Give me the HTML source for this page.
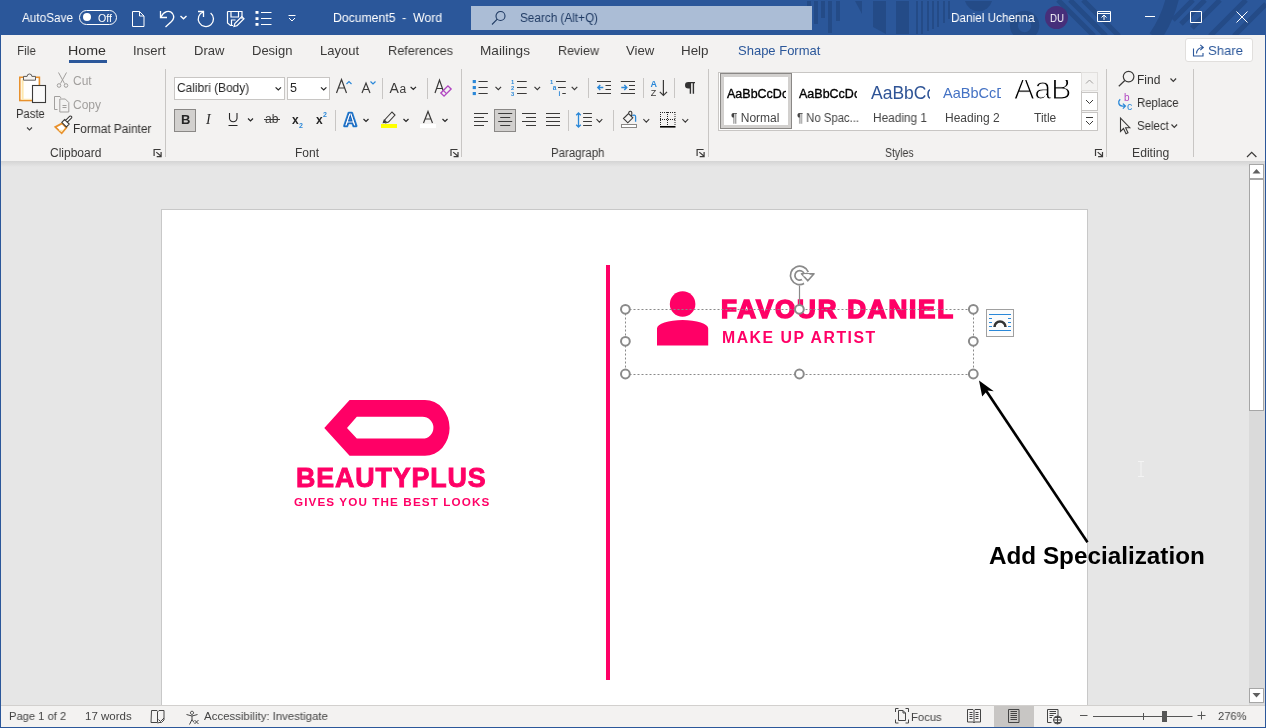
<!DOCTYPE html>
<html><head><meta charset="utf-8">
<style>
*{margin:0;padding:0;box-sizing:border-box}
html,body{width:1266px;height:728px;overflow:hidden;font-family:"Liberation Sans",sans-serif;background:#e6e6e6;position:relative}
.a{position:absolute}
.t{position:absolute;white-space:nowrap;line-height:1;will-change:transform}
#title{left:0;top:0;width:1266px;height:35px;background:#2b579a;overflow:hidden}
#tabs{left:0;top:35px;width:1266px;height:30px;background:#f3f2f1}
#ribbon{left:0;top:65px;width:1266px;height:96px;background:#f3f2f1}
#shadow{left:0;top:161px;width:1266px;height:6px;background:linear-gradient(#d4d4d4,#e6e6e6)}
#status{left:0;top:705px;width:1266px;height:23px;background:#f3f2f1}
.tab{font-size:13px;color:#3b3a39}
.rl{font-size:12px;color:#323130}
.gl{font-size:12px;color:#3b3a39}
.sep{position:absolute;width:1px;background:#c8c6c4}
</style></head><body>
<div id="title" class="a">
<svg class="a" style="left:0;top:0" width="1266" height="35">
<g fill="#244b87">
<rect x="807" y="1" width="4" height="23"/><rect x="814" y="1" width="4" height="23"/><rect x="821" y="1" width="4" height="17"/><rect x="828" y="1" width="4" height="32"/><rect x="836" y="1" width="4" height="20"/>
<path d="M855 1h7v13z"/><path d="M873 1h13v33l-13-7z"/><rect x="896" y="1" width="13" height="33"/>
<rect x="916" y="1" width="2" height="33"/><rect x="921" y="1" width="2" height="33"/><rect x="927" y="1" width="2" height="30"/><rect x="932" y="1" width="2" height="28"/><rect x="937" y="1" width="2" height="26"/><rect x="943" y="1" width="2" height="22"/><rect x="948" y="1" width="2" height="18"/>
<path d="M965 1h27a14 14 0 0 1-27 0z"/>
</g>
<circle cx="1024.6" cy="25.5" r="10.7" fill="none" stroke="#244b87" stroke-width="8"/>
<path d="M1172.5 -2A114.7 114.7 0 0 1 1155 37" fill="none" stroke="#244b87" stroke-width="13"/>
<g stroke="#244b87" stroke-width="5">
<path d="M1058 0l36 36M1070 0l36 36M1083 0l36 36"/>
<path d="M1193 0l-20 20M1205 0l-24 24M1220 0l-28 28M1246 0l-36 36M1266 4l-32 32"/>
</g>
</svg>
<div class="t" style="left:22px;top:12px;font-size:12.5px;color:#fff;transform:scaleX(0.941);transform-origin:0 0">AutoSave</div>
<div class="a" style="left:79px;top:10px;width:38px;height:15px;border:1px solid #fff;border-radius:8px"></div>
<div class="a" style="left:83px;top:13px;width:8px;height:8px;background:#fff;border-radius:50%"></div>
<div class="t" style="left:98px;top:12.5px;font-size:10.6px;color:#fff">Off</div>
<svg class="a" style="left:0;top:0" width="320" height="35" fill="none" stroke="#fff" stroke-width="1">
<path d="M132.5 11.5h7l4.5 4.5v10.5h-11.5z M139.5 11.5v4.5h4.5"/>
<path d="M160.5 11v6.5h6.5" stroke-width="1.3"/>
<path d="M161 17C163.5 11.5 169.5 9.5 172.5 13.5C174.5 16.5 173.5 19.5 171.5 21.5L165.5 27" stroke-width="1.3"/>
<path d="M180.5 16l3 2.8 3-2.8" stroke-width="1.4"/>
<path d="M198 11.5h5.5v5.5" stroke-width="1.3"/>
<path d="M203.3 11.8A7.6 7.6 0 1 0 210.6 13" stroke-width="1.3"/>
<path d="M227.5 11.5h14.5v7.5 M227.5 11.5v11.5l3 2.5h2.5 M231 11.5v5.5h7.5v-5.5 M231.5 25.5v-5.5h4" stroke-width="1.2"/>
<path d="M234 26.5l0.8-3 7-7 2.2 2.2-7 7z" stroke-width="1.2"/>
<path d="M261 12.5h10.5 M261 18.5h10.5 M261 24.5h10.5" stroke-width="1.2"/>
<path d="M288.5 15.5h7 M289 18l3 3 3-3"/>
</svg>
<g></g>
<svg class="a" style="left:0;top:0" width="320" height="35" fill="#fff">
<rect x="255.5" y="11" width="3" height="2.8"/><rect x="255.5" y="17.2" width="3" height="2.8"/><rect x="255.5" y="23" width="3" height="2.8"/>
</svg>
<div class="t" style="left:333px;top:12px;font-size:12.5px;color:#fff;transform:scaleX(0.977);transform-origin:0 0">Document5&nbsp; -&nbsp; Word</div>
<div class="a" style="left:471px;top:6px;width:341px;height:24px;background:#abbdd6"></div>
<svg class="a" style="left:490px;top:10px" width="18" height="16" fill="none" stroke="#1f3a63" stroke-width="1.1"><circle cx="10.5" cy="6" r="4.5"/><path d="M7.3 9.2L2 14.5"/></svg>
<div class="t" style="left:520px;top:11.5px;font-size:12.5px;color:#1f3a63;transform:scaleX(0.940);transform-origin:0 0">Search (Alt+Q)</div>
<div class="t" style="left:951px;top:12px;font-size:12.5px;color:#fff;transform:scaleX(0.939);transform-origin:0 0">Daniel Uchenna</div>
<div class="a" style="left:1045px;top:6px;width:23px;height:23px;border-radius:50%;background:#462f7a"></div>
<div class="t" style="left:1050px;top:12.5px;font-size:11px;color:#fff;transform:scaleX(0.881);transform-origin:0 0">DU</div>
<svg class="a" style="left:1090px;top:0" width="176" height="35" fill="none" stroke="#fff" stroke-width="1">
<path d="M7.5 11.5h13v10h-13z M7.5 13.5h13 M14 20v-5 M11.5 17.5l2.5-2.5 2.5 2.5"/>
<path d="M55 16.5h10"/>
<path d="M100.5 11.5h11v11h-11z"/>
<path d="M146.5 11.5l11 11 M157.5 11.5l-11 11"/>
</svg>
</div>
<div id="tabs" class="a">
<div class="t tab" style="left:17.2px;top:9px;transform:scaleX(0.905);transform-origin:0 0">File</div>
<div class="t tab" style="left:68.2px;top:9px;color:#323130;transform:scaleX(1.095);transform-origin:0 0">Home</div>
<div class="a" style="left:69px;top:25px;width:38px;height:3px;background:#2b579a"></div>
<div class="t tab" style="left:133.2px;top:9px">Insert</div>
<div class="t tab" style="left:194.2px;top:9px">Draw</div>
<div class="t tab" style="left:252.2px;top:9px">Design</div>
<div class="t tab" style="left:320.2px;top:9px">Layout</div>
<div class="t tab" style="left:388.2px;top:9px;transform:scaleX(0.977);transform-origin:0 0">References</div>
<div class="t tab" style="left:480.2px;top:9px;transform:scaleX(1.048);transform-origin:0 0">Mailings</div>
<div class="t tab" style="left:558.2px;top:9px;transform:scaleX(0.962);transform-origin:0 0">Review</div>
<div class="t tab" style="left:626.2px;top:9px;transform:scaleX(1.014);transform-origin:0 0">View</div>
<div class="t tab" style="left:681.2px;top:9px;transform:scaleX(1.030);transform-origin:0 0">Help</div>
<div class="t tab" style="left:738.2px;top:9px;color:#2b579a;transform:scaleX(1.000);transform-origin:0 0">Shape Format</div>
<div class="a" style="left:1185px;top:3px;width:68px;height:24px;background:#fff;border:1px solid #e1dfdd;border-radius:3px"></div>
<svg class="a" style="left:1191px;top:7px" width="18" height="16" fill="none" stroke="#2b579a" stroke-width="1"><path d="M2.5 6.5v7.5h9.5v-3 M5.5 11.5c0.3-3.5 2.5-6 6.5-6 M9.3 2.8l3 2.7-3 2.7" stroke-width="1.1"/></svg>
<div class="t tab" style="left:1208.2px;top:9px;color:#2b579a;font-size:13.5px;transform:scaleX(0.972);transform-origin:0 0">Share</div>
</div>
<div id="ribbon" class="a">
<!-- Clipboard -->
<svg class="a" style="left:0;top:0" width="170" height="97">
<rect x="19.8" y="12.3" width="19.6" height="23.2" fill="#fff" stroke="#e8912d" stroke-width="1.6"/>
<path d="M21.6 14.2h2v19.5h8v1h-10z" fill="#fde8b0"/>
<path d="M23.5 15.2v-3.8h3.6a2.4 2.4 0 0 1 4.8 0h3.6v3.8z" fill="#f3f2f1" stroke="#605e5c" stroke-width="1"/>
<rect x="32.5" y="20.5" width="13" height="17" fill="#fafafa" stroke="#3b3a39" stroke-width="1.1"/>
<path d="M27 62.5l2.5 2.5 2.5-2.5" fill="none" stroke="#444" stroke-width="1.1"/>
<g fill="none" stroke="#a19f9d" stroke-width="1">
<path d="M58.5 7.5l6 11 M66.5 7.5l-6 11"/><circle cx="59" cy="20.5" r="1.8"/><circle cx="66" cy="20.5" r="1.8"/>
<path d="M57.5 44.5h-3v-13h5.5l1 1.5 M59.8 34h5.5l3.5 3.5v9.5h-9z M62.5 40.5h4 M62.5 42.5h4"/>
</g>
<path d="M53.8 61.8L62.2 57.2L67.6 62.6L61.8 69.6Z" fill="#e8912d"/>
<path d="M56.8 62.2L62 59.5L65.2 62.8L61.6 67Z" fill="#fff"/>
<path d="M58.5 65L61.6 67L63.5 64.8Z" fill="#fde8b0"/>
<path d="M61.8 57.3l2.8-2.8 4.6 4.6-2.8 2.8z M65.6 55.4l4.2-4.2a1.3 1.3 0 0 1 1.8 1.8l-4.2 4.2" fill="#fff" stroke="#3b3a39" stroke-width="1.1"/>
<path d="M154.1 91V84.5H160.6 M156.3 87.1L161.1 91.3 M161.1 87.1V91.6H156.7" stroke-width="1.2" fill="none" stroke="#3b3a39"/>
</svg>
<div class="t rl" style="left:16px;top:43px;transform:scaleX(0.935);transform-origin:0 0">Paste</div>
<div class="t rl" style="left:73px;top:10px;color:#a19f9d">Cut</div>
<div class="t rl" style="left:73px;top:34px;color:#a19f9d">Copy</div>
<div class="t rl" style="left:73px;top:58px;transform:scaleX(0.989);transform-origin:0 0">Format Painter</div>
<div class="t gl" style="left:50px;top:82px;transform:scaleX(0.992);transform-origin:0 0">Clipboard</div>
<div class="sep" style="left:165px;top:4px;height:88px"></div>
<!-- Font -->
<div class="a" style="left:174px;top:12px;width:111px;height:23px;background:#fff;border:1px solid #c8c6c4"></div>
<div class="t rl" style="left:177px;top:17px;font-size:12.5px;color:#262626;transform:scaleX(0.954);transform-origin:0 0">Calibri (Body)</div>
<div class="a" style="left:287px;top:12px;width:43px;height:23px;background:#fff;border:1px solid #c8c6c4"></div>
<div class="t rl" style="left:290px;top:17px;font-size:12.5px;color:#262626">5</div>
<div class="a" style="left:174px;top:44px;width:22px;height:23px;background:#d2d0ce;border:1px solid #8a8886"></div>
<svg class="a" style="left:0;top:0" width="470" height="97">
<g fill="none" stroke="#262626" stroke-width="1.2">
<path d="M275.6 22.3l2.7 2.7 2.7-2.7 M321 22.3l2.7 2.7 2.7-2.7 M410.6 21.8l2.7 2.7 2.7-2.7"/>
<path d="M248 53.5l2.5 2.5 2.5-2.5 M363.5 54l2.5 2.5 2.5-2.5 M403.5 54l2.5 2.5 2.5-2.5 M442.5 54l2.5 2.5 2.5-2.5"/>
</g>
<g fill="none" stroke="#3b3a39" stroke-width="1.2">
<path d="M336.5 28l5-13.5 5 13.5 M338.3 23h6.4"/>
<path d="M362 28l4-10 4 10 M363.5 24.5h5"/>

<path d="M435 28l4.5-13 4.5 13 M436.7 23.5h5.6"/>
</g>
<text x="389.5" y="28" font-family="Liberation Sans" font-size="14" fill="#3b3a39">A</text><text x="399.5" y="28" font-family="Liberation Sans" font-size="12" fill="#3b3a39">a</text>
<path d="M346.5 19l2.5-2.5 2.5 2.5 M370.5 16.5l2.5 2.5 2.5-2.5" fill="none" stroke="#2b88d8" stroke-width="1.2"/>
<path d="M451.1 24.05L447.95 20.87L440.87 27.95L444.05 31.13Z" fill="#f3f2f1" stroke="#b146c2" stroke-width="1.4"/><path d="M446.5 28.6L443.4 25.5" stroke="#b146c2" stroke-width="1.2"/>
<text x="181" y="58.5" font-family="Liberation Sans" font-weight="bold" font-size="13" fill="#262626">B</text>
<text x="206" y="58.5" font-family="Liberation Serif" font-style="italic" font-size="14" fill="#262626">I</text>
<path d="M229.5 48v5.5a3.8 3.8 0 0 0 7.5 0v-5.5 M228.5 60.5h9" fill="none" stroke="#262626" stroke-width="1.1"/>
<text x="265" y="58" font-family="Liberation Sans" font-size="12" fill="#3b3a39">ab</text>
<path d="M264 54.5h16" stroke="#3b3a39" stroke-width="1"/>
<text x="292" y="59" font-family="Liberation Sans" font-weight="bold" font-size="12" fill="#262626">x</text>
<text x="299" y="63" font-family="Liberation Sans" font-weight="bold" font-size="7" fill="#2b88d8">2</text>
<text x="316" y="59" font-family="Liberation Sans" font-weight="bold" font-size="12" fill="#262626">x</text>
<text x="323" y="52" font-family="Liberation Sans" font-weight="bold" font-size="7" fill="#2b88d8">2</text>
<text x="344" y="60.5" font-family="Liberation Sans" font-weight="bold" font-size="17.5" fill="#fff" stroke="#2b88d8" stroke-width="2.6" stroke-linejoin="round">A</text>
<text x="344" y="60.5" font-family="Liberation Sans" font-weight="bold" font-size="17.5" fill="#fff" stroke="#0f5ab4" stroke-width="0.9">A</text>
<path d="M383.5 57l2-3 6.5-7 3 3-6.5 7-3 1z" fill="none" stroke="#3b3a39" stroke-width="1.1"/>
<path d="M382.5 58.5l1.5-4.5 3 3z" fill="#3b3a39"/>
<rect x="381" y="59" width="16" height="4" fill="#ffff00"/>
<path d="M423.5 58l4.5-11.5 4.5 11.5 M425.3 54h5.4" fill="none" stroke="#3b3a39" stroke-width="1.2"/>
<rect x="420" y="59" width="16" height="4" fill="#fff"/>
<path d="M451.0 91V84.5H457.5 M453.2 87.1L458.0 91.3 M458.0 87.1V91.6H453.6" stroke-width="1.2" fill="none" stroke="#3b3a39"/>
</svg>
<div class="sep" style="left:382px;top:13px;height:21px"></div>
<div class="sep" style="left:427px;top:13px;height:21px"></div>
<div class="sep" style="left:335px;top:45px;height:21px"></div>
<div class="t gl" style="left:295px;top:82px;transform:scaleX(1.000);transform-origin:0 0">Font</div>
<div class="sep" style="left:461px;top:4px;height:88px"></div>
<!-- Paragraph -->
<svg class="a" style="left:460px;top:0" width="260" height="97">
<g fill="#2b88d8">
<rect x="12.7" y="15" width="3.2" height="3.1"/><rect x="12.7" y="21" width="3.2" height="3.1"/><rect x="12.7" y="27" width="3.2" height="3.1"/>
</g>
<g fill="none" stroke="#3b3a39" stroke-width="1">
<path d="M18.5 16.5h9.2 M18.5 22.5h9.2 M18.5 28.5h9.2" stroke-width="1.2"/>
<path d="M57 16.5h9.7 M57 22.5h9.7 M57 28.5h9.7" stroke-width="1.2"/>
<path d="M96 16.5h9.8 M98 22.5h7.8 M102.3 28.5h3.5" stroke-width="1.2"/>
<path d="M35.5 21.8l2.8 2.8 2.8-2.8 M74.5 21.8l2.8 2.8 2.8-2.8 M111.7 21.8l2.8 2.8 2.8-2.8" stroke-width="1.2"/>
<path d="M137 16.5h14 M145.5 20.5h5.5 M145.5 24.5h5.5 M137 28.5h14" stroke-width="1.2"/>
<path d="M160.8 16.5h14.2 M169 20.5h6 M169 24.5h6 M160.8 28.5h14.2" stroke-width="1.2"/>

</g>
<path d="M137.8 22.5h5.5 M140.3 20l-2.5 2.5 2.5 2.5 M161.3 22.5h5.5 M164.3 20l2.5 2.5-2.5 2.5" fill="none" stroke="#2b88d8" stroke-width="1.4"/>
<text x="51" y="19" font-family="Liberation Sans" font-weight="bold" font-size="5.8" fill="#2b88d8">1</text>
<text x="51" y="25" font-family="Liberation Sans" font-weight="bold" font-size="5.8" fill="#2b88d8">2</text>
<text x="51" y="31" font-family="Liberation Sans" font-weight="bold" font-size="5.8" fill="#2b88d8">3</text>
<text x="90" y="19" font-family="Liberation Sans" font-weight="bold" font-size="5.8" fill="#2b88d8">1</text>
<text x="92.8" y="25" font-family="Liberation Sans" font-weight="bold" font-size="6.5" fill="#2b88d8">a</text>
<text x="98.5" y="31" font-family="Liberation Sans" font-weight="bold" font-size="6.5" fill="#2b88d8">i</text>
<text x="190.5" y="21.8" font-family="Liberation Sans" font-weight="bold" font-size="9" fill="#2b88d8">A</text>
<text x="190.8" y="30.6" font-family="Liberation Sans" font-size="9" fill="#3b3a39">Z</text>
<path d="M203.4 15v15.3 M199.8 26.8l3.6 3.6 3.6-3.6" fill="none" stroke="#3b3a39" stroke-width="1.2"/>
<path d="M228 17.6h7 M230.4 17.5v11.2 M233.4 17.5v11.2" fill="none" stroke="#333" stroke-width="1.4"/><path d="M230.4 16.9H228.3A3.3 3.25 0 0 0 228.3 23.4H230.4Z" fill="#333"/>

</svg>
<div class="a" style="left:494px;top:44px;width:22px;height:23px;background:#d2d0ce;border:1px solid #8a8886"></div>
<svg class="a" style="left:460px;top:0" width="260" height="97">
<g fill="none" stroke="#3b3a39" stroke-width="1">
<path d="M14 48.5h14 M14 52.5h10 M14 56.5h14 M14 60.5h10" stroke-width="1.2"/>
<path d="M38.2 48.5h14 M40.2 52.5h10 M38.2 56.5h14 M40.2 60.5h10" stroke-width="1.2"/>
<path d="M62 48.5h14 M66 52.5h10 M62 56.5h14 M66 60.5h10" stroke-width="1.2"/>
<path d="M86 48.5h14 M86 52.5h14 M86 56.5h14 M86 60.5h14" stroke-width="1.2"/>
<path d="M123.1 48.5h8.8 M123.1 52.5h8.8 M123.1 56.5h8.8 M123.1 60.5h8.8" stroke-width="1.2"/>
<path d="M136.5 54.2l2.9 2.9 2.9-2.9 M183.4 54.2l2.9 2.9 2.9-2.9 M222.4 54.2l2.9 2.9 2.9-2.9" stroke-width="1.1"/>
<rect x="161.5" y="59.5" width="15" height="3" fill="#fff" stroke="#8a8886"/>
<path d="M163.5 53.5L168.5 48.5L172.8 52.8L167.8 57.8Z M168.5 48.5l0.5-1.5a1.5 1.5 0 0 1 2.8 0.5v3.5" stroke-width="1.1"/>
<path d="M200 61.8h15.5" stroke="#000" stroke-width="1.6"/>
</g>
<path d="M118.5 48v14 M116.2 50.3l2.3-2.3 2.3 2.3 M116.2 59.7l2.3 2.3 2.3-2.3" fill="none" stroke="#2b88d8" stroke-width="1.3"/>
<path d="M172.6 51a1.6 1.6 0 0 1 3 0.8v5" fill="none" stroke="#2b88d8" stroke-width="1.3"/>
<path d="M200.5 47v14 M215 47v14 M200 47.5h15.5 M207.5 47v14 M200 54.5h15.5" fill="none" stroke="#262626" stroke-width="1" stroke-dasharray="1 1"/>
<path d="M237.1 91V84.5H243.6 M239.3 87.1L244.1 91.3 M244.1 87.1V91.6H239.7" stroke-width="1.2" fill="none" stroke="#3b3a39"/>
</svg>
<div class="sep" style="left:588px;top:13px;height:20px"></div>
<div class="sep" style="left:643px;top:13px;height:20px"></div>
<div class="sep" style="left:674px;top:13px;height:20px"></div>
<div class="sep" style="left:568px;top:45px;height:21px"></div>
<div class="sep" style="left:613px;top:45px;height:21px"></div>
<div class="t gl" style="left:551px;top:82px;transform:scaleX(0.954);transform-origin:0 0">Paragraph</div>
<div class="sep" style="left:708px;top:4px;height:88px"></div>
<!-- Styles -->
<div class="a" style="left:718px;top:7px;width:380px;height:59px;background:#fff;border:1px solid #c8c6c4"></div>
<div class="a" style="left:720px;top:8px;width:72px;height:56px;border:1px solid #8a8886;box-shadow:inset 0 0 0 3px #d2d0ce"></div>
<div class="a" style="left:723px;top:15px;width:63px;height:30px;overflow:hidden"><div class="t" style="left:3.5px;top:7.5px;font-size:12.5px;color:#000;-webkit-text-stroke:0.35px #000">AaBbCcDc</div></div>
<div class="t" style="left:731px;top:47px;font-size:12px;color:#444">&para; Normal</div>
<div class="a" style="left:795px;top:15px;width:62px;height:30px;overflow:hidden"><div class="t" style="left:4px;top:7.5px;font-size:12.5px;color:#000;-webkit-text-stroke:0.35px #000">AaBbCcDc</div></div>
<div class="t" style="left:797px;top:47px;font-size:12px;color:#444;transform:scaleX(0.942);transform-origin:0 0">&para; No Spac...</div>
<div class="a" style="left:870px;top:14px;width:60px;height:30px;overflow:hidden"><div class="t" style="left:1px;top:6px;font-size:17.5px;color:#2f5496">AaBbCc</div></div>
<div class="t" style="left:873px;top:47px;font-size:12px;color:#444;transform:scaleX(0.987);transform-origin:0 0">Heading 1</div>
<div class="a" style="left:942px;top:14px;width:59px;height:30px;overflow:hidden"><div class="t" style="left:0.5px;top:6.5px;font-size:14.5px;color:#4472c4">AaBbCcD</div></div>
<div class="t" style="left:945px;top:47px;font-size:12px;color:#444;transform:scaleX(0.998);transform-origin:0 0">Heading 2</div>
<div class="a" style="left:1010px;top:14.8px;width:66px;height:22px;overflow:hidden"><div class="t" style="left:3.5px;top:-5.6px;font-size:30.8px;color:#000;-webkit-text-stroke:1.1px #fff;letter-spacing:-0.3px">AaB</div></div>
<div class="t" style="left:1034px;top:47px;font-size:12px;color:#444;transform:scaleX(0.991);transform-origin:0 0">Title</div>
<div class="a" style="left:1081px;top:7px;width:17px;height:59px;background:#f3f2f1;border-left:1px solid #c8c6c4"></div>
<div class="a" style="left:1081px;top:7px;width:17px;height:19px;border:1px solid #e1dfdd;background:#f3f2f1"></div>
<div class="a" style="left:1081px;top:27px;width:17px;height:19px;border:1px solid #c8c6c4;background:#fff"></div>
<div class="a" style="left:1081px;top:47px;width:17px;height:19px;border:1px solid #c8c6c4;background:#fff"></div>
<svg class="a" style="left:1080px;top:0" width="30" height="97" fill="none" stroke="#3b3a39" stroke-width="1">
<path d="M6 18.5l3.5-3.5 3.5 3.5" stroke="#a19f9d"/>
<path d="M6 35l3.5 3.5 3.5-3.5"/>
<path d="M6 52.5h7 M6 56l3.5 3.5 3.5-3.5"/>
<path d="M15.5 91V84.5H22.0 M17.7 87.1L22.5 91.3 M22.5 87.1V91.6H18.1" stroke-width="1.2" stroke="#3b3a39"/>
</svg>
<div class="t gl" style="left:885px;top:82px;transform:scaleX(0.875);transform-origin:0 0">Styles</div>
<div class="sep" style="left:1106px;top:4px;height:88px"></div>
<!-- Editing -->
<svg class="a" style="left:1110px;top:0" width="156" height="97" fill="none" stroke-width="1.1">
<circle cx="18.6" cy="11.6" r="5.3" stroke="#3b3a39" stroke-width="1.2"/><path d="M14.8 15.5l-6 5.8" stroke="#3b3a39" stroke-width="1.2"/>
<path d="M60.5 13.5l2.8 2.8 2.8-2.8 M61.5 59.5l2.8 2.8 2.8-2.8" stroke="#3b3a39" stroke-width="1.2"/>
<path d="M10.2 34.2C7.5 36.5 8.5 41 12.5 41.1H15.2 M12.9 38.6l2.5 2.5-2.5 2.5" stroke="#2b88d8" stroke-width="1.3"/>
<path d="M10.5 53v13.5l3-3 2.5 5.2 2-1-2.4-5h4.2z" stroke="#3b3a39" stroke-width="1.1"/>
<path d="M137 92l4.7-4.7 4.7 4.7" stroke="#3b3a39" stroke-width="1.2"/>
</svg>
<div class="t" style="left:1123.5px;top:27.5px;font-size:10px;color:#b146c2">b</div>
<div class="t" style="left:1127.2px;top:36px;font-size:10.5px;color:#2b88d8">c</div>
<div class="t rl" style="left:1137px;top:9px;transform:scaleX(0.987);transform-origin:0 0">Find</div>
<div class="t rl" style="left:1137px;top:32px;transform:scaleX(0.945);transform-origin:0 0">Replace</div>
<div class="t rl" style="left:1137px;top:55px;transform:scaleX(0.952);transform-origin:0 0">Select</div>
<div class="t gl" style="left:1132px;top:82px;transform:scaleX(1.016);transform-origin:0 0">Editing</div>
<div class="sep" style="left:1193px;top:4px;height:88px"></div>
</div>
<div id="shadow" class="a"></div>
<!-- page -->
<div class="a" style="left:161px;top:209px;width:927px;height:520px;background:#fff;border:1px solid #c8c8c8"></div>
<!-- scrollbar -->
<div class="a" style="left:1249px;top:163px;width:16px;height:542px;background:#dadada"></div>
<div class="a" style="left:1249px;top:164px;width:15px;height:15px;background:#fff;border:1px solid #a6a6a6"></div>
<div class="a" style="left:1249px;top:179px;width:15px;height:232px;background:#fff;border:1px solid #a6a6a6"></div>
<div class="a" style="left:1249px;top:688px;width:15px;height:15px;background:#fff;border:1px solid #a6a6a6"></div>
<svg class="a" style="left:1249px;top:164px" width="16" height="540"><path d="M3.5 9.5h8l-4-4.5z M3.5 529h8l-4 4.5z" fill="#606060"/></svg>
<!-- document content -->
<svg class="a" style="left:0;top:0" width="1266" height="728">
<rect x="606" y="265" width="4" height="415" fill="#ff0066"/>
<path fill="#ff0066" fill-rule="evenodd" d="M324.3 428L349.6 400H425A24.6 27.9 0 0 1 425 455.8H349.6Z M347 428L356.8 416.8H422.5A10.9 10.9 0 0 1 422.5 438.6H356.8Z"/>
<circle cx="682.6" cy="304" r="12.8" fill="#ff0066"/>
<path fill="#ff0066" d="M657 345.5V328.6A25.6 8.6 0 0 1 708.2 328.6V345.5Z"/>
<rect x="986.5" y="309.5" width="27" height="27" fill="#fcfcfc" stroke="#a0a0a0" stroke-width="1"/>
<path d="M989 314.5h22 M989 330.5h22 M989 318.5h3 M989 322.5h3 M989 326.5h3 M1008 318.5h3 M1008 322.5h3 M1008 326.5h3" stroke="#2b88d8" stroke-width="1"/>
<path d="M994.5 327A5.5 5.5 0 0 1 1005.5 327" fill="none" stroke="#333" stroke-width="2.6"/>
<path d="M1087.5 542.3L985 389" stroke="#000" stroke-width="2.6"/>
<path d="M979 380.4L982.2 396.5L987.5 390.5L993.8 391.2Z" fill="#000"/>
</svg>
<div class="t" style="left:720.5px;top:296px;font-size:26px;font-weight:bold;color:#ff0066;letter-spacing:1.8px;-webkit-text-stroke:1.6px #ff0066">FAVOUR DANIEL</div>
<div class="t" style="left:721.5px;top:329.5px;font-size:15.8px;font-weight:bold;color:#ff0066;letter-spacing:1.52px">MAKE UP ARTIST</div>
<div class="t" style="left:296px;top:464.5px;font-size:26.8px;font-weight:bold;color:#ff0066;letter-spacing:0.9px;-webkit-text-stroke:0.9px #ff0066">BEAUTYPLUS</div>
<div class="t" style="left:294px;top:496px;font-size:11.7px;font-weight:bold;color:#ff0066;letter-spacing:1.1px">GIVES YOU THE BEST LOOKS</div>
<svg class="a" style="left:0;top:0" width="1266" height="728">
<g fill="none" stroke="#8a8a8a" stroke-width="1" stroke-dasharray="2 2">
<path d="M625.5 309.5H973.5 M625.5 374.5H973.5 M625.5 309.5V374.5 M973.5 309.5V374.5"/>
</g>
<path d="M799.5 285.5V309" stroke="#8a8a8a" stroke-width="1.2"/>
<g fill="#fff" stroke="#8a8a8a" stroke-width="2">
<circle cx="625.4" cy="309.3" r="4.4"/><circle cx="799.4" cy="309.3" r="4.4"/><circle cx="973.3" cy="309.3" r="4.4"/>
<circle cx="625.4" cy="341.3" r="4.4"/><circle cx="973.3" cy="341.3" r="4.4"/>
<circle cx="625.4" cy="374" r="4.4"/><circle cx="799.4" cy="374" r="4.4"/><circle cx="973.3" cy="374" r="4.4"/>
</g>
<path d="M806.2 272.8A7 7 0 1 0 803 281.6" fill="none" stroke="#8a8a8a" stroke-width="6.2"/>
<path d="M806.2 272.8A7 7 0 1 0 803 281.6" fill="none" stroke="#fff" stroke-width="2.8"/>
<path d="M801.5 273.8h12.5l-6.2 7z" fill="#fff" stroke="#8a8a8a" stroke-width="1.7" stroke-linejoin="round"/>
<path d="M803.5 275.2h6" stroke="#fff" stroke-width="2.2"/>
</svg>
<div class="t" style="left:988.5px;top:545px;font-size:23.3px;font-weight:bold;color:#000;transform:scaleX(1.042);transform-origin:0 0">Add Specialization</div>
<svg class="a" style="left:1136px;top:460px" width="10" height="18" fill="none" stroke="#f4f4f4" stroke-width="1"><path d="M2 1.5h6 M5 1.5v15 M2 16.5h6"/></svg>
<div id="status" class="a" style="border-top:1px solid #d2d0ce">
<div class="t" style="left:9px;top:5px;font-size:11.5px;color:#444;transform:scaleX(0.971);transform-origin:0 0">Page 1 of 2</div>
<div class="t" style="left:85px;top:5px;font-size:11.5px;color:#444;transform:scaleX(0.994);transform-origin:0 0">17 words</div>
<svg class="a" style="left:0;top:0" width="1266" height="23" fill="none" stroke="#444" stroke-width="1">
<path d="M151.5 4.5h5.5l1 1 1-1h5v9.5l-2.5 2.5h-2.5l-1 .5-1-.5h-6z M157.5 5.5v10.5 M158.5 13.5l2 2 3.5-3.5"/>
<path d="M192 5.2a1.6 1.6 0 1 0 .01 0 M186.5 8.5l5.5 1.5 5.5-1.5 M192 10v3.5l-2.5 5 M192 13.5l2 3 M194.5 14l4 4 M198.5 14l-4 4"/>
<path d="M895.5 6V2.5h3 M908.5 6V2.5h-3 M895.5 13.5v3.5h3 M908.5 13.5v3.5h-3 M898.5 4.5h4.5l2.5 2.5v7.5h-7z M903 4.5v2.5h2.5"/>
<path d="M967.5 3.5h5.5l1 1 1-1h5.5v12.5h-5.5l-1 .7-1-.7h-5.5z M974 4.5v12 M969.5 6.5h3 M969.5 8.5h3 M969.5 10.5h3 M969.5 12.5h3 M975.5 6.5h3 M975.5 8.5h3 M975.5 10.5h3 M975.5 12.5h3"/>
</svg>
<div class="a" style="left:994px;top:0;width:40px;height:21px;background:#c8c6c4"></div>
<svg class="a" style="left:0;top:0" width="1266" height="23" fill="none" stroke="#444" stroke-width="1">
<path d="M1008.5 3.5h10.5v13h-10.5z M1010.5 5.5h6.5 M1010.5 7.5h6.5 M1010.5 9.5h6.5 M1010.5 11.5h6.5 M1010.5 13.5h6.5"/>
<path d="M1047.5 3.5h10.5v9 M1047.5 3.5v13h4 M1049.5 5.5h6.5 M1049.5 7.5h6.5 M1049.5 9.5h4 M1049.5 11.5h2.5"/><circle cx="1057.5" cy="14" r="4" fill="#f3f2f1"/>
<path d="M1053.5 14h8 M1057.5 10v8 M1055 11.5h5 M1055 16.5h5"/>
<path d="M1080 9.5h7.5 M1093 10.5h99.5 M1197.5 9.5h8 M1201.5 5.5v8" stroke="#555"/>
<path d="M1143.5 7v7" stroke="#555"/>
</svg>
<div class="a" style="left:1162px;top:4.7px;width:4.6px;height:11px;background:#555"></div>
<div class="t" style="left:911.2px;top:5.5px;font-size:11.5px;color:#444;transform:scaleX(0.978);transform-origin:0 0">Focus</div>
<div class="t" style="left:204px;top:5px;font-size:11.5px;color:#444;transform:scaleX(0.994);transform-origin:0 0">Accessibility: Investigate</div>
<div class="t" style="left:1218px;top:5px;font-size:11.5px;color:#444;transform:scaleX(0.969);transform-origin:0 0">276%</div>
</div>
<!-- window border -->
<div class="a" style="left:0;top:35px;width:1px;height:693px;background:#2b579a"></div>
<div class="a" style="left:1265px;top:35px;width:1px;height:693px;background:#2b579a"></div>
<div class="a" style="left:0;top:727px;width:1266px;height:1px;background:#2b579a"></div>
</body></html>
